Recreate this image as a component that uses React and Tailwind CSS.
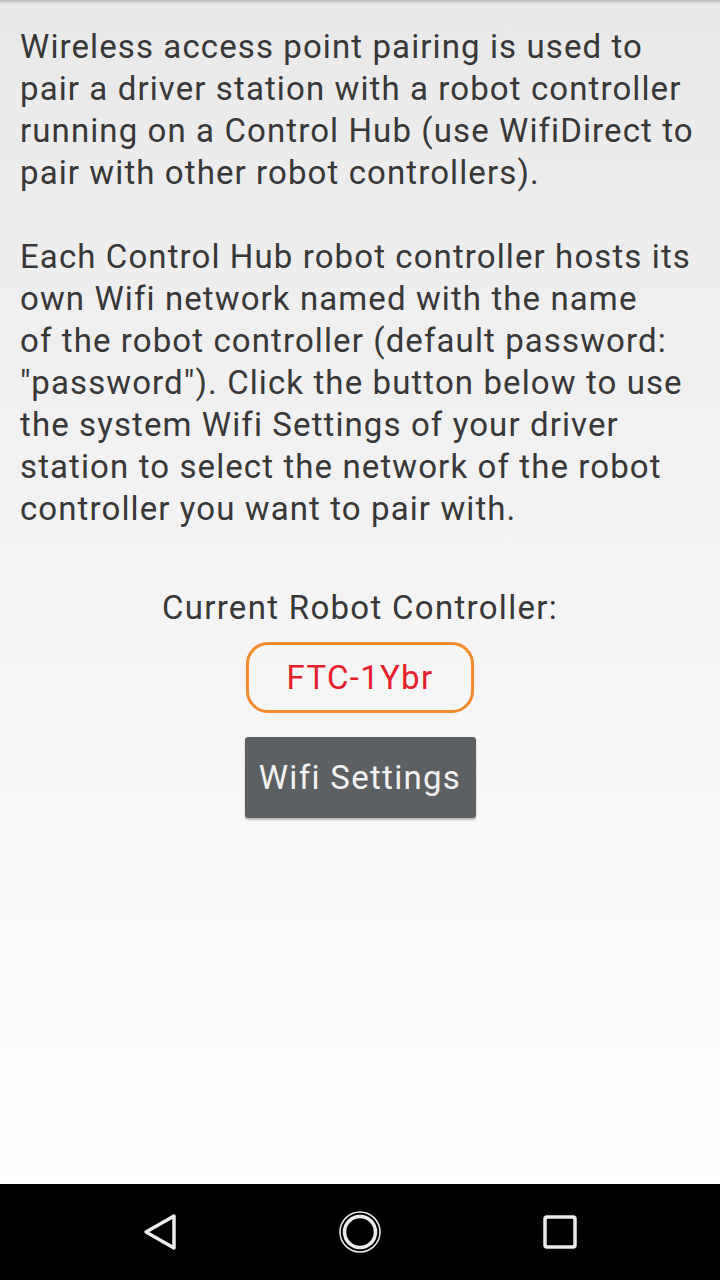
export default function App() {
  return (
    <div className="flex h-[1280px] w-[720px] flex-col font-['Roboto',sans-serif]">
      <main className="relative flex flex-1 flex-col bg-gradient-to-b from-[#e9e9e9] to-[#ffffff]">
        <div className="h-[4px] w-full bg-gradient-to-b from-[#9a9a9a] to-transparent opacity-60" />
        <div className="whitespace-nowrap px-5 pt-[22px] text-[33px] leading-[42px] tracking-[1.1px] text-[#383838]">
          <p>
            Wireless access point pairing is used to
            <br />
            pair a driver station with a robot controller
            <br />
            running on a Control Hub (use WifiDirect to
            <br />
            pair with other robot controllers).
          </p>
          <p className="mt-[42px]">
            Each Control Hub robot controller hosts its
            <br />
            own Wifi network named with the name
            <br />
            of the robot controller (default password:
            <br />
            "password"). Click the button below to use
            <br />
            the system Wifi Settings of your driver
            <br />
            station to select the network of the robot
            <br />
            controller you want to pair with.
          </p>
        </div>
        <div className="mt-[57px] flex flex-col items-center whitespace-nowrap tracking-[1.3px]">
          <div className="text-[33px] leading-[42px] text-[#383838]">
            Current Robot Controller:
          </div>
          <div className="mt-[13px] flex h-[71px] w-[228px] items-center justify-center rounded-[22px] border-[3px] border-[#f48a2e] text-[33px] text-[#e5202a]">
            FTC-1Ybr
          </div>
          <button className="mt-[24px] h-[81px] w-[231px] rounded-[3px] bg-[#5d6063] text-[33px] tracking-[1.3px] text-[#f2f2f2] shadow-[0_2px_2px_rgba(0,0,0,0.25)]">
            Wifi Settings
          </button>
        </div>
      </main>
      <nav className="flex h-[96px] items-center justify-between bg-black px-[142px]">
        <svg width="36" height="40" viewBox="0 0 36 40">
          <path d="M32 4 L4 20 L32 36 Z" fill="none" stroke="#ececec" strokeWidth="3.5" strokeLinejoin="round" />
        </svg>
        <svg width="44" height="44" viewBox="0 0 44 44">
          <circle cx="22" cy="22" r="20" fill="none" stroke="#ececec" strokeWidth="1.5" />
          <circle cx="22" cy="22" r="15.5" fill="none" stroke="#ececec" strokeWidth="3.5" />
        </svg>
        <svg width="36" height="36" viewBox="0 0 36 36">
          <rect x="3" y="3" width="30" height="30" rx="2" fill="none" stroke="#ececec" strokeWidth="3.5" />
        </svg>
      </nav>
    </div>
  );
}
